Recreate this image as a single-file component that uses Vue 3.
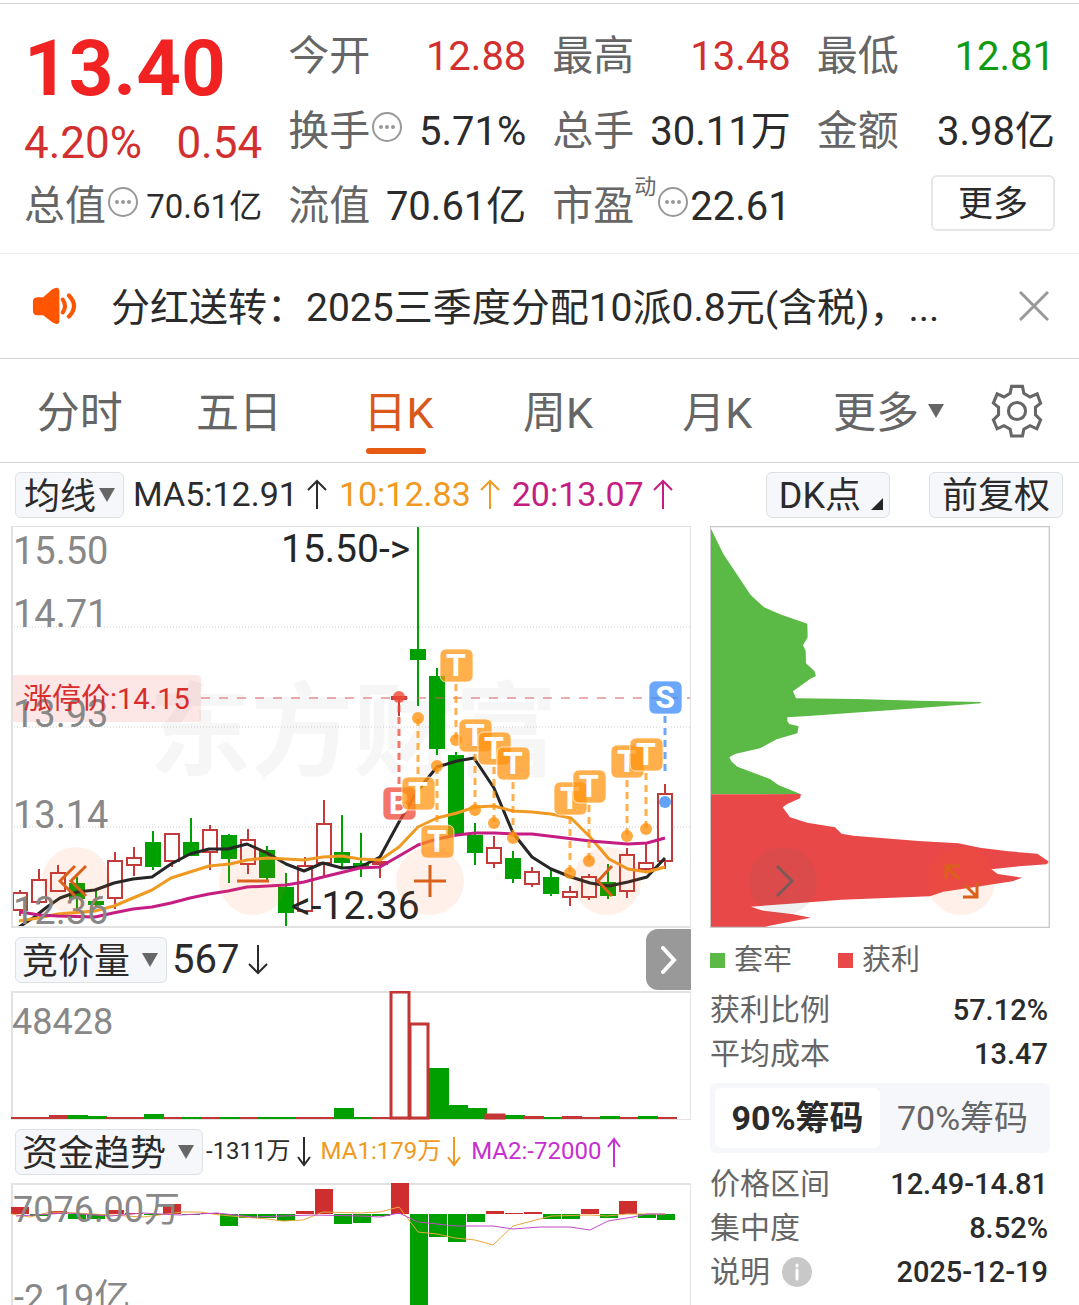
<script setup>
import { ref } from 'vue'

const tabs = ['分时', '五日', '日K', '周K', '月K']
const activeTab = ref('日K')
const noticeOpen = ref(true)
const chipRange = ref('90')

const STEP = 19

// Candles: [up, body top, body bottom, high, low] in chart units
const candleRows = [
  [1, 367, 384, 364, 390], [1, 354, 376, 343, 378], [1, 347, 365, 339, 365],
  [0, 358, 372, 351, 382], [0, 376, 378, 365, 380], [1, 335, 372, 326, 383],
  [1, 332, 339, 321, 350], [0, 317, 340, 305, 344], [1, 308, 335, 308, 341],
  [0, 317, 329, 292, 329], [1, 304, 326, 299, 344], [0, 310, 332, 308, 357],
  [1, 314, 338, 303, 348], [0, 325, 351, 320, 355], [0, 362, 386, 347, 401],
  [1, 340, 385, 331, 386], [1, 298, 337, 274, 351], [0, 327, 336, 289, 341],
  [0, 338, 341, 307, 351], [1, 336, 338, 334, 352], [1, 171, 173, 170, 190],
  [0, 124, 133, 0, 180], [0, 151, 222, 142, 229], [0, 230, 308, 226, 308],
  [0, 310, 326, 297, 339], [1, 322, 337, 310, 342], [0, 333, 352, 325, 357],
  [1, 346, 358, 341, 361], [0, 352, 367, 344, 370], [1, 366, 371, 360, 380],
  [1, 351, 371, 348, 374], [0, 357, 369, 338, 373], [1, 329, 365, 322, 372],
  [1, 337, 343, 317, 346], [1, 268, 335, 258, 343],
]
const candles = candleRows.map(([up, top, bottom, high, low], i) => ({
  up, top, bottom, high, low, x: Math.round(9 + i * 18.97),
}))

const ma5 = '8,401 22,392 36,381 49,372 66,366 84,364 103,357 122,353 141,351 160,338 179,328 198,323 217,323 236,318 256,327 275,338 293,345 312,337 331,342 349,341 369,331 388,296 407,264 426,241 446,235 463,232 483,262 502,307 521,331 540,343 560,351 579,357 598,360 617,356 636,351 654,332'
const ma10 = '8,395 27,392 47,388 84,385 103,380 122,372 141,364 160,352 179,346 198,340 219,338 236,334 256,332 293,334 312,331 331,330 349,333 369,334 388,321 407,301 426,292 446,287 464,281 483,280 502,285 521,286 540,288 560,292 579,311 598,333 617,343 636,346 654,341'
const ma20 = '9,386 29,389 47,390 84,391 102,387 122,383 141,381 160,377 179,372 198,368 217,365 236,361 275,359 293,356 312,351 349,342 369,341 388,330 407,319 426,313 446,309 464,307 483,307 502,308 521,308 579,315 617,318 636,317 654,312'

const priceMarks = [
  { y: 38, text: '15.50' }, { y: 101, text: '14.71' }, { y: 201, text: '13.93' },
  { y: 302, text: '13.14' }, { y: 398, text: '12.36' },
]

// Trade marks: letter, x, badge centre y, dot y
const trades = [
  ['B', 388, 277, 171], ['T', 407, 267, 192], ['T', 426, 315, 240], ['T', 445, 139, 214],
  ['T', 464, 209, 284], ['T', 483, 222, 297], ['T', 502, 237, 312], ['T', 559, 272, 347],
  ['T', 578, 260, 335], ['T', 616, 235, 310], ['T', 635, 228, 303], ['S', 654, 171, 276],
].map(([letter, x, y, dot]) => ({
  letter, x, y, dot,
  from: y < dot ? y + 19 : y - 19,
  to: letter === 'S' ? 247 : dot,
}))

const volumeRows = 'r2 r2 r4 g4 g3 r2 r2 g5 r2 g2 r2 g2 r2 g2 g2 r2 r2 g11 g2 r2 o128 o96 g51 g14 g11 o5 g4 r3 g2 r3 r2 g3 r2 g3 r2'
const volumes = volumeRows.split(' ').map((v, i) => ({
  kind: v[0], h: Number(v.slice(1)), x: i * STEP,
}))

const flows = [
  7, -2, 3, -5, -5, 4, 1, -1, 10, -1, 1, -12, -4, -4, -7, 3, 25, -10, -9, -2, 31, -95,
  -23, -28, -8, 3, 1, 2, -5, -5, 5, -4, 13, -4, -6,
].map((v, i) => ({ up: v > 0, h: Math.abs(v), x: i * STEP, y: v > 0 ? 31 - v : 31 }))
const flowMa1 = '1,31 19,34 39,29 66,30 99,32 132,34 172,29 189,29 209,32 232,34 256,36 272,38 292,37 312,29 349,30 369,29 388,24 407,49 426,51 444,55 464,57 482,62 502,43 521,38 540,33 579,32 596,33 616,31 654,31'
const flowMa2 = '5,33 56,30 99,33 132,30 169,32 206,30 242,34 302,32 349,33 369,34 388,30 407,39 426,41 444,43 482,43 502,46 529,44 559,44 579,47 597,38 622,34 636,31 654,31'

const chipLocked = '30,20 70,102 152,225 192,262 240,283 322,311 323,352 309,376 317,392 318,430 343,453 348,468 330,477 279,514 288,535 470,537 655,542 842,546 842,550 620,567 450,579 325,588 262,592 262,604 268,612 296,619 292,640 230,658 180,685 105,702 88,712 95,725 112,740 210,777 235,795 303,823 30,823'
const chipProfit = '30,823 303,822 300,835 262,852 248,862 270,892 322,908 405,922 425,941 460,947 655,963 775,970 840,983 925,994 1012,1001 1047,1025 1040,1033 945,1040 874,1048 893,1062 966,1073 938,1084 840,1099 730,1115 690,1129 425,1139 270,1151 153,1160 185,1171 280,1183 333,1193 250,1209 205,1218 190,1223 30,1223'
</script>

<template>
  <main class="page">
    <section class="quote">
      <div class="price">
        <strong class="last">13.40</strong>
        <div class="change"><span>4.20%</span><span>0.54</span></div>
      </div>
      <div class="cell"><span class="k">今开</span><span class="v up">12.88</span></div>
      <div class="cell"><span class="k">最高</span><span class="v up">13.48</span></div>
      <div class="cell"><span class="k">最低</span><span class="v down">12.81</span></div>
      <div class="cell">
        <span class="k">换手</span>
        <svg class="hint" viewBox="0 0 32 32"><circle cx="16" cy="16" r="14" /><path d="M10 16h0M16 16h0M22 16h0" /></svg>
        <span class="v">5.71%</span>
      </div>
      <div class="cell"><span class="k">总手</span><span class="v">30.11万</span></div>
      <div class="cell"><span class="k">金额</span><span class="v">3.98亿</span></div>
      <div class="cell">
        <span class="k">总值</span>
        <svg class="hint" viewBox="0 0 32 32"><circle cx="16" cy="16" r="14" /><path d="M10 16h0M16 16h0M22 16h0" /></svg>
        <span class="v small">70.61亿</span>
      </div>
      <div class="cell"><span class="k">流值</span><span class="v">70.61亿</span></div>
      <div class="cell">
        <span class="k">市盈</span><sup class="dyn">动</sup>
        <svg class="hint" viewBox="0 0 32 32"><circle cx="16" cy="16" r="14" /><path d="M10 16h0M16 16h0M22 16h0" /></svg>
        <span class="v">22.61</span>
      </div>
      <div class="cell"><button class="more" type="button">更多</button></div>
    </section>

    <section v-if="noticeOpen" class="notice">
      <svg class="horn" viewBox="94 110 134 112">
        <path d="M96 153q0-12 12-13h18L153 117Q174 104 174 125V207Q174 227 153 214L126 193h-18q-12 0-12-13Z" fill="#ff5500" />
        <path d="M184 147q13 19 0 38M202 135q30 31 0 62" fill="none" stroke="#ff5500" stroke-width="12" stroke-linecap="round" />
      </svg>
      <p>分红送转：2025三季度分配10派0.8元(含税)，...</p>
      <button class="close" type="button" aria-label="关闭" @click="noticeOpen = false">
        <svg viewBox="0 0 30 30"><path d="M1 1L29 29M29 1L1 29" /></svg>
      </button>
    </section>

    <nav class="tabs">
      <button v-for="t in tabs" :key="t" class="tab" type="button" :class="{ on: t === activeTab }" @click="activeTab = t">{{ t }}</button>
      <div class="tabs-end">
        <button type="button"><span class="tab">更多</span><svg class="tri" viewBox="0 0 16 14"><path d="M0 0H16L8 14Z" /></svg></button>
        <button type="button" aria-label="设置">
          <svg class="gear" viewBox="1313 403 152 156">
            <path d="M1373 409H1405L1409 429L1427 440L1448 431L1458 458L1443 470V492L1458 507L1447 533L1427 524L1409 534L1405 554H1373L1369 534L1351 524L1331 533L1320 507L1335 492V470L1320 458L1331 431L1351 440L1369 429Z" />
            <circle cx="1389" cy="481" r="25" />
          </svg>
        </button>
      </div>
    </nav>

    <section class="averages">
      <label class="pick near">
        <select aria-label="主图指标"><option>均线</option></select>
        <svg class="tri" viewBox="0 0 16 14"><path d="M0 0H16L8 14Z" /></svg>
      </label>
      <span class="ma">MA5:12.91<svg class="arrow" viewBox="0 0 20 30"><path d="M10 30V2M1 11L10 2L19 11" /></svg></span>
      <span class="ma amber">10:12.83<svg class="arrow" viewBox="0 0 20 30"><path d="M10 30V2M1 11L10 2L19 11" /></svg></span>
      <span class="ma pink">20:13.07<svg class="arrow" viewBox="0 0 20 30"><path d="M10 30V2M1 11L10 2L19 11" /></svg></span>
      <div class="modes">
        <button class="mode" type="button">DK点<svg class="corner" viewBox="0 0 12 12"><path d="M12 0V12H0Z" /></svg></button>
        <button class="mode" type="button">前复权</button>
      </div>
    </section>

    <section class="board">
      <div class="left">
        <div class="stage">
          <svg class="chart" viewBox="0 0 680 402">
            <text class="mark" x="138" y="242">东方财富</text>
            <path class="dots" d="M0 101H680M0 201H680M0 301H680" />
            <g v-for="(c, i) in candles" :key="i" :class="c.up ? 'rise' : 'fall'">
              <path :d="`M${c.x} ${c.high}V${c.top}M${c.x} ${c.bottom}V${c.low}`" />
              <rect :x="c.x - 7" :y="c.top" width="14" :height="c.bottom - c.top" />
            </g>
            <polyline class="line" :points="ma5" stroke="#262626" />
            <polyline class="line" :points="ma10" stroke="#ef9a22" />
            <polyline class="line" :points="ma20" stroke="#c51d82" />
            <path d="M190 172H680" stroke="#d65a5a" stroke-dasharray="9 9" />
            <g v-for="(t, i) in trades" :key="'t' + i" :class="'trade ' + t.letter">
              <path :d="`M${t.x} ${t.from}V${t.to}`" />
              <circle :cx="t.x" :cy="t.dot" r="6" />
              <rect :x="t.x - 16" :y="t.y - 16" width="33" height="33" rx="6" />
              <text :x="t.x" :y="t.y + 11">{{ t.letter }}</text>
            </g>
            <rect x="0" y="149" width="190" height="47" rx="4" fill="#f04040" fill-opacity=".13" />
            <text v-for="p in priceMarks" :key="p.text" class="scale" x="2" :y="p.y">{{ p.text }}</text>
            <text class="limit" x="12" y="183">涨停价:14.15</text>
            <text class="peak" x="270" y="36">15.50-&gt;</text>
            <text class="peak" x="280" y="393">&lt;-12.36</text>
            <rect class="frame" x="1" y="0" width="679" height="401" />
          </svg>
          <div class="tools">
            <button type="button" aria-label="最早"><svg viewBox="0 0 68 68"><path d="M33 19L18 34L33 49M44 19L29 34L44 49" /></svg></button>
            <button type="button" aria-label="缩小"><svg viewBox="0 0 68 68"><path d="M18 34H50" /></svg></button>
            <button type="button" aria-label="放大"><svg viewBox="0 0 68 68"><path d="M18 34H50M34 18V50" /></svg></button>
            <button type="button" aria-label="左移"><svg viewBox="0 0 68 68"><path d="M39 19L25 34L39 49" /></svg></button>
          </div>
        </div>

        <div class="bar">
          <label class="pick">
            <select aria-label="副图一"><option>竞价量</option></select>
            <svg class="tri" viewBox="0 0 16 14"><path d="M0 0H16L8 14Z" /></svg>
          </label>
          <span class="volume">567<svg class="arrow" viewBox="0 0 20 30"><path d="M10 0V28M1 19L10 28L19 19" /></svg></span>
          <button class="fold" type="button" aria-label="收起"><svg viewBox="0 0 16 28"><path d="M2 2L13 14L2 26" /></svg></button>
        </div>
        <svg class="chart" viewBox="0 0 680 129">
          <rect class="frame" x="1" y="1" width="679" height="128" />
          <text class="sub" x="1" y="43">48428</text>
          <g v-for="(b, i) in volumes" :key="i">
            <rect v-if="b.kind === 'o'" :x="b.x" :y="129 - b.h" width="18" :height="b.h - 2" fill="#fff" stroke="#c43535" stroke-width="3" />
            <rect v-else :x="b.x" :y="128 - b.h" width="20" :height="b.h" :fill="b.kind === 'r' ? '#c43535' : '#00a000'" />
          </g>
        </svg>

        <div class="bar">
          <label class="pick">
            <select aria-label="副图二"><option>资金趋势</option></select>
            <svg class="tri" viewBox="0 0 16 14"><path d="M0 0H16L8 14Z" /></svg>
          </label>
          <div class="flow">
            <span>-1311万<svg class="arrow thin" viewBox="0 0 14 30"><path d="M7 0V28M1 20L7 28L13 20" /></svg></span>
            <span class="amber">MA1:179万<svg class="arrow thin" viewBox="0 0 14 30"><path d="M7 0V28M1 20L7 28L13 20" /></svg></span>
            <span class="violet">MA2:-72000<svg class="arrow thin" viewBox="0 0 14 30"><path d="M7 30V2M1 10L7 2L13 10" /></svg></span>
          </div>
        </div>
        <svg class="chart" viewBox="0 0 680 122">
          <path class="frame" d="M1 122V1H680V122" />
          <rect v-for="(b, i) in flows" :key="i" :x="b.x" :y="b.y" width="18" :height="b.h" :fill="b.up ? '#cf2e2e' : '#00a000'" />
          <polyline class="hair" :points="flowMa1" stroke="#e8a63c" />
          <polyline class="hair" :points="flowMa2" stroke="#c24ac8" />
          <text class="sub" x="2" y="39">7076.00万</text>
          <text class="sub" x="3" y="127">-2.19亿</text>
        </svg>
      </div>

      <aside class="right">
        <div class="stage">
          <svg class="chart" viewBox="30 18 1020 1206">
            <polygon :points="chipLocked" fill="#5bb945" />
            <polygon :points="chipProfit" fill="#e94848" />
            <path d="M31 1224V20H1048V1222H30" fill="none" stroke="#c8c8c8" stroke-width="4" />
          </svg>
          <div class="tools chips">
            <button class="grey" type="button" aria-label="右移"><svg viewBox="0 0 68 68"><path d="M28 19L43 34L28 49" /></svg></button>
            <button type="button" aria-label="全屏"><svg viewBox="0 0 68 68"><path d="M19 32V19H33M19 19L32 32M36 50H50V36M50 50L38 38" /></svg></button>
          </div>
        </div>
        <div class="legend">
          <span><i class="locked"></i>套牢</span>
          <span><i class="profit"></i>获利</span>
        </div>
        <dl>
          <div><dt>获利比例</dt><dd>57.12%</dd></div>
          <div><dt>平均成本</dt><dd>13.47</dd></div>
        </dl>
        <div class="segment">
          <button type="button" :class="{ on: chipRange === '90' }" @click="chipRange = '90'">90%筹码</button>
          <button type="button" :class="{ on: chipRange === '70' }" @click="chipRange = '70'">70%筹码</button>
        </div>
        <dl>
          <div><dt>价格区间</dt><dd>12.49-14.81</dd></div>
          <div><dt>集中度</dt><dd>8.52%</dd></div>
          <div>
            <dt>说明<svg class="info" viewBox="0 0 30 30"><circle cx="15" cy="15" r="15" /><path d="M15 13V22M15 8V9" /></svg></dt>
            <dd>2025-12-19</dd>
          </div>
        </dl>
      </aside>
    </section>
  </main>
</template>

<style>
body {
  margin: 0;
  background: #fff;
}
</style>

<style scoped>
.page {
  padding-top: 3px;
  overflow: hidden;
  color: #2b2b2b;
  font-family: Roboto, "Noto Sans CJK SC", sans-serif;
  line-height: 1.2;
}
button, select {
  margin: 0;
  padding: 0;
  border: 0;
  background: none;
  color: inherit;
  font: inherit;
}
svg {
  display: block;
  flex: none;
}
.quote {
  display: grid;
  grid-template-columns: repeat(4, 1fr);
  grid-auto-rows: 75px;
  column-gap: 26px;
  padding: 15px 24px 9px;
  border-top: 1px solid #d6d6d6;
  border-bottom: 1px solid #ececec;
}
.price {
  grid-row: span 2;
  color: #d23030;
}
.last {
  display: block;
  color: #f02222;
  font-size: 78px;
  line-height: 100px;
}
.change {
  display: flex;
  justify-content: space-between;
  font-size: 44px;
  line-height: 48px;
}
.cell {
  display: flex;
  align-items: center;
  white-space: nowrap;
}
.k {
  color: #666;
  font-size: 41px;
}
.v {
  margin-left: auto;
  font-size: 40px;
}
.v.small {
  font-size: 33px;
}
.up {
  color: #d23030;
}
.down {
  color: #109a10;
}
.hint {
  width: 32px;
  height: 32px;
  margin: 0 1px 10px;
  fill: none;
  stroke: #999;
  stroke-width: 2;
}
.hint path {
  stroke-width: 4;
  stroke-linecap: round;
}
.dyn {
  align-self: flex-start;
  color: #666;
  font-size: 22px;
  line-height: 36px;
}
.more {
  width: 124px;
  height: 56px;
  margin: 0 0 8px auto;
  padding-top: 4px;
  border: 2px solid #e6e6e6;
  border-radius: 6px;
  font-size: 35px;
}
.notice {
  display: flex;
  align-items: center;
  height: 104px;
  padding: 0 30px 0 32px;
  border-bottom: 1px solid #d6d6d6;
}
.horn {
  width: 46px;
  height: 38px;
}
.notice p {
  flex: 1;
  margin: 0 0 0 33px;
  padding-top: 3px;
  overflow: hidden;
  font-size: 39px;
  line-height: 60px;
  white-space: nowrap;
}
.close svg {
  width: 30px;
  height: 30px;
  stroke: #999;
  stroke-width: 3;
}
.tabs {
  display: grid;
  grid-template-columns: repeat(5, 1fr) 282px;
  height: 103px;
  border-bottom: 1px solid #d6d6d6;
  color: #666;
  font-size: 43px;
}
.tab {
  position: relative;
  padding-top: 6px;
}
.tabs .on {
  color: #d9581a;
}
.tabs .on::after {
  position: absolute;
  bottom: 8px;
  left: calc(50% - 32px);
  width: 60px;
  height: 6px;
  border-radius: 3px;
  background: #e65a12;
  content: "";
}
.tabs-end {
  display: flex;
  align-items: center;
  justify-content: space-between;
  padding: 0 36px;
}
.tabs-end button {
  display: flex;
  align-items: center;
  gap: 9px;
}
.tri {
  width: 16px;
  height: 14px;
  fill: #666;
}
.gear {
  width: 52px;
  height: 54px;
  fill: none;
  stroke: #666;
  stroke-width: 9;
}
.averages {
  display: flex;
  align-items: center;
  height: 63px;
  padding: 0 16px 0 15px;
}
.pick {
  display: flex;
  align-items: center;
  gap: 11px;
  height: 46px;
  padding: 0 8px 0 6px;
  box-sizing: border-box;
  border: 1px solid #dde1e6;
  border-radius: 6px;
  background: #f6f7fa;
  font-size: 36px;
}
.pick.near {
  gap: 2px;
  margin-right: 9px;
  padding: 0 8px;
}
.pick select {
  height: 44px;
  padding-top: 3px;
  appearance: none;
  outline: 0;
}
.ma {
  display: flex;
  align-items: center;
  gap: 9px;
  margin-right: 12px;
  font-size: 34px;
  white-space: nowrap;
}
.arrow {
  width: 20px;
  height: 30px;
  fill: none;
  stroke: currentColor;
  stroke-width: 2;
}
.amber {
  color: #f09a22;
}
.pink {
  color: #c51d82;
}
.violet {
  color: #c62fd0;
}
.modes {
  display: flex;
  gap: 39px;
  margin-left: auto;
}
.mode {
  display: flex;
  align-items: center;
  height: 46px;
  padding: 4px 12px 0;
  border: 1px solid #dde1e6;
  border-radius: 6px;
  background: #f6f7fa;
  font-size: 36px;
}
.corner {
  width: 12px;
  height: 12px;
  margin: 14px -6px 0 10px;
  fill: #262626;
}
.board {
  display: grid;
  grid-template-columns: 2fr 1fr;
  gap: 19px;
  padding: 0 29px 0 11px;
}
.left, .right {
  min-width: 0;
}
.stage {
  position: relative;
}
.chart {
  width: 100%;
  height: auto;
}
.frame {
  fill: none;
  stroke: #e2e2e2;
  stroke-width: 2;
}
.dots {
  stroke: #ccc;
  stroke-dasharray: 1 2;
}
.mark {
  fill: #f6f6f6;
  font-size: 102px;
  font-weight: 700;
}
.rise {
  fill: #fff;
  stroke: #c23a3a;
  stroke-width: 2;
}
.fall {
  fill: #00a000;
  stroke: #00a000;
  stroke-width: 2;
}
.line {
  fill: none;
  stroke-width: 3;
  stroke-linejoin: round;
}
.hair {
  fill: none;
  stroke-width: 1;
}
.trade {
  --tone: #ff9410;
}
.trade.B {
  --tone: #f04836;
}
.trade.S {
  --tone: #3a8bfa;
}
.trade path {
  stroke: var(--tone);
  stroke-width: 3;
  stroke-dasharray: 7 5;
  stroke-opacity: .75;
}
.trade circle {
  fill: var(--tone);
  fill-opacity: .8;
}
.trade rect {
  fill: var(--tone);
  fill-opacity: .75;
  stroke: #fff;
  stroke-opacity: .7;
}
.trade text {
  fill: #fff;
  font-size: 32px;
  font-weight: 700;
  text-anchor: middle;
}
.scale {
  fill: #888;
  font-size: 38px;
}
.sub {
  fill: #888;
  font-size: 36px;
}
.peak {
  fill: #262626;
  font-size: 39px;
}
.limit {
  fill: #d92c2c;
  font-size: 29px;
}
.tools {
  position: absolute;
  right: 50px;
  bottom: 13px;
  left: 31px;
  display: flex;
  justify-content: space-between;
}
.tools.chips {
  right: 55px;
  left: 39px;
}
.tools button {
  width: 68px;
  height: 68px;
  border-radius: 50%;
  background: rgba(250, 95, 20, .09);
}
.tools svg {
  width: 68px;
  height: 68px;
  fill: none;
  stroke: #d9611c;
  stroke-width: 3;
}
.tools .grey {
  background: rgba(110, 110, 110, .1);
}
.tools .grey svg {
  stroke: #7d5a5a;
}
.bar {
  display: flex;
  align-items: center;
  height: 63px;
  padding-left: 4px;
}
.volume {
  display: flex;
  align-items: center;
  gap: 9px;
  margin-left: 5px;
  font-size: 40px;
}
.fold {
  display: flex;
  align-items: center;
  justify-content: center;
  width: 45px;
  height: 61px;
  margin-left: auto;
  border-radius: 12px 0 0 12px;
  background: #999;
}
.fold svg {
  width: 16px;
  height: 28px;
  fill: none;
  stroke: #fff;
  stroke-width: 4;
  stroke-linecap: round;
}
.flow {
  display: flex;
  gap: 10px;
  margin-left: 3px;
  font-size: 24px;
  white-space: nowrap;
}
.flow span {
  display: flex;
  align-items: center;
  gap: 6px;
}
.arrow.thin {
  width: 14px;
}
.legend {
  display: flex;
  gap: 46px;
  height: 60px;
  padding-top: 4px;
  box-sizing: border-box;
  color: #666;
  font-size: 29px;
}
.legend span {
  display: flex;
  align-items: center;
  gap: 9px;
}
.legend i {
  width: 15px;
  height: 15px;
}
.locked {
  background: #5bb945;
}
.profit {
  background: #e94848;
}
dl {
  margin: 0;
  padding-right: 2px;
}
dl div {
  display: flex;
  align-items: center;
  justify-content: space-between;
  height: 44px;
}
dt {
  display: flex;
  align-items: center;
  gap: 12px;
  color: #666;
  font-size: 30px;
}
dd {
  margin: 0;
  font-size: 29px;
  font-weight: 500;
}
.info {
  width: 30px;
  height: 30px;
  fill: #c8c8c8;
}
.info path {
  stroke: #fff;
  stroke-width: 3;
  stroke-linecap: round;
}
.segment {
  display: grid;
  grid-template-columns: 1fr 1fr;
  height: 70px;
  margin: 7px 0 9px;
  padding: 5px;
  box-sizing: border-box;
  border-radius: 6px;
  background: #f6f7fa;
  color: #666;
  font-size: 34px;
}
.segment .on {
  border-radius: 6px;
  background: #fff;
  color: #2b2b2b;
  font-weight: 700;
}
</style>
